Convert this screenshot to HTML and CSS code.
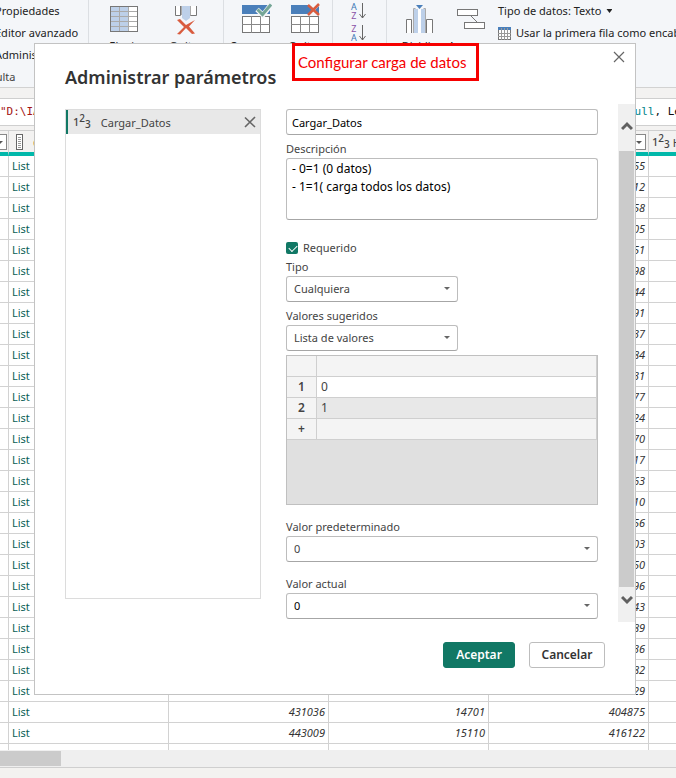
FILE: index.html
```html
<!DOCTYPE html>
<html lang="es">
<head>
<meta charset="utf-8">
<title>Administrar parámetros</title>
<link rel="stylesheet" href="styles.css">
</head>
<body>
<div class="app">
  <header class="ribbon">
    <div class="group group-query">
      <a href="#">Propiedades</a>
      <a href="#">Editor avanzado</a>
      <a href="#">Administrar</a>
      <span>Consulta</span>
    </div>
    <div class="group group-columns">
      <button class="tool" type="button">
        <svg width="30" height="36" viewBox="0 0 30 36"><rect x="1.500" y="3.500" width="27" height="25" fill="#fff"/><path d="M2 4h18v24H2z" fill="#bdd0e9"/><path d="M1 8.500h28M1 13.500h28M1 18.500h28M1 23.500h28M10.500 3v26M19.500 3v26" stroke="#aaa" fill="none"/><rect x="1.500" y="3.500" width="27" height="25" fill="none" stroke="#777"/></svg>
        <span>Elegir</span>
      </button>
      <button class="tool" type="button">
        <svg width="30" height="36" viewBox="0 0 30 36"><path d="M4.500 3v9.500h5V3M19.500 3v9.500h6V3" fill="#fff" stroke="#777"/><path d="M11 3h8v12l-4 3-4-3z" fill="#bdd0e9"/><path d="M10.500 3v9M19.500 3v9" stroke="#aaa"/><path d="M6 17l3-1 6 6 9-5-6 6.500 6 7-3 .5-6-6-6 6.500-3-.5 7-7z" fill="#d95c3f"/></svg>
        <span>Quitar</span>
      </button>
    </div>
    <div class="group group-rows">
      <button class="tool" type="button">
        <svg width="32" height="36" viewBox="0 0 32 36"><path d="M2 2h28v9H2z" fill="#4a7fba"/><rect x="2.500" y="13.500" width="27" height="16" fill="#fff" stroke="#777"/><path d="M2 21.500h28M11.500 13v17M20.500 13v17" stroke="#888"/><path d="M17 6.500l6 5.500L31.500 1" stroke="#f4f6f9" stroke-width="5" fill="none"/><path d="M17.500 6.500l5 5L31 1.500" stroke="#75a696" stroke-width="3" fill="none"/></svg>
        <span>Conservar</span>
      </button>
      <button class="tool" type="button">
        <svg width="32" height="36" viewBox="0 0 32 36"><path d="M2 2h18l3 4-3 5H2z" fill="#4a7fba"/><path d="M30 3v8h-1l-3-4z" fill="#4a7fba"/><rect x="2.500" y="13.500" width="27" height="16" fill="#fff" stroke="#777"/><path d="M2 21.500h28M11.500 13v17M20.500 13v17" stroke="#888"/><path d="M19 2l11 10M30 1L19 12" stroke="#d95c3f" stroke-width="2.500" fill="none"/></svg>
        <span>Quitar</span>
      </button>
    </div>
    <div class="group group-sort">
      <button class="sort" type="button" aria-label="Orden ascendente">
        <span class="az"><b class="blue">A</b><b class="violet">Z</b></span>
        <svg width="7" height="16" viewBox="0 0 7 16"><path d="M3.500 0v15M.5 11l3 4 3-4" stroke="#666" fill="none"/></svg>
      </button>
      <button class="sort" type="button" aria-label="Orden descendente">
        <span class="az"><b class="violet">Z</b><b class="blue">A</b></span>
        <svg width="7" height="16" viewBox="0 0 7 16"><path d="M3.500 0v15M.5 11l3 4 3-4" stroke="#666" fill="none"/></svg>
      </button>
    </div>
    <div class="group group-transform">
      <button class="tool" type="button">
        <svg width="30" height="36" viewBox="0 0 30 36"><path d="M2.500 30V16.500h5V30M22.500 30V16.500h6V30" fill="#fff" stroke="#777"/><path d="M10 6h4v24h-4zM17 6h4v24h-4z" fill="#bdd0e9"/><path d="M14 6h3v24h-3z" fill="#fff"/><path d="M9.500 30V5.500h2M21.500 30V5.500h-2" stroke="#aaa" fill="none"/><path d="M12 2h7l-3.500 4z" fill="#4a7fba"/></svg>
        <span>Dividir</span>
      </button>
      <button class="tool" type="button">
        <svg width="32" height="36" viewBox="0 0 32 36"><rect x="3.500" y="6.500" width="20" height="6" fill="#fff" stroke="#777"/><rect x="10.500" y="19.500" width="20" height="6" fill="#fff" stroke="#777"/><path d="M17 13l6 6" stroke="#777"/></svg>
        <span>Agrupar</span>
      </button>
      <div class="links">
        <a href="#">Tipo de datos: Texto <i class="caret dark"></i></a>
        <a href="#"><svg width="13" height="13" viewBox="0 0 13 13"><rect x=".5" y=".5" width="12" height="12" fill="#fff" stroke="#777"/><path d="M0 0h13v3H0z" fill="#4a7fba"/><path d="M3.500 1v12M6.500 1v12M9.500 1v12M0 6.500h13M0 9.500h13" stroke="#999"/></svg>Usar la primera fila como encabezado</a>
      </div>
    </div>
  </header>

  <div class="formula">
    <span class="string">"D:\IA</span>
    <span class="tail"><span class="keyword">null</span>, Length</span>
  </div>

  <main class="grid-wrap">
    <table class="grid">
      <colgroup><col class="c-edge"><col><col><col><col><col class="c-last"></colgroup>
      <thead>
        <tr>
          <th><i class="filter"></i></th>
          <th class="list-head"><svg width="7" height="16" viewBox="0 0 7 16"><rect x=".5" y=".5" width="6" height="15" fill="#fff" stroke="#666"/><path d="M2 3.500h3M2 5.500h3M2 7.500h3M2 9.500h3M2 11.500h3M2 13.500h3" stroke="#999"/></svg><span>Col</span></th>
          <th></th><th></th>
          <th class="num"><i class="filter"></i></th>
          <th class="typed"><span class="n123">1<sup>2</sup><sub>3</sub></span><span class="col-name">H</span></th>
        </tr>
      </thead>
      <tbody>
        <tr><td></td><td>List</td><td></td><td></td><td>55</td><td></td></tr>
        <tr><td></td><td>List</td><td></td><td></td><td>12</td><td></td></tr>
        <tr><td></td><td>List</td><td></td><td></td><td>58</td><td></td></tr>
        <tr><td></td><td>List</td><td></td><td></td><td>05</td><td></td></tr>
        <tr><td></td><td>List</td><td></td><td></td><td>51</td><td></td></tr>
        <tr><td></td><td>List</td><td></td><td></td><td>98</td><td></td></tr>
        <tr><td></td><td>List</td><td></td><td></td><td>44</td><td></td></tr>
        <tr><td></td><td>List</td><td></td><td></td><td>91</td><td></td></tr>
        <tr><td></td><td>List</td><td></td><td></td><td>37</td><td></td></tr>
        <tr><td></td><td>List</td><td></td><td></td><td>84</td><td></td></tr>
        <tr><td></td><td>List</td><td></td><td></td><td>31</td><td></td></tr>
        <tr><td></td><td>List</td><td></td><td></td><td>77</td><td></td></tr>
        <tr><td></td><td>List</td><td></td><td></td><td>24</td><td></td></tr>
        <tr><td></td><td>List</td><td></td><td></td><td>70</td><td></td></tr>
        <tr><td></td><td>List</td><td></td><td></td><td>17</td><td></td></tr>
        <tr><td></td><td>List</td><td></td><td></td><td>63</td><td></td></tr>
        <tr><td></td><td>List</td><td></td><td></td><td>10</td><td></td></tr>
        <tr><td></td><td>List</td><td></td><td></td><td>56</td><td></td></tr>
        <tr><td></td><td>List</td><td></td><td></td><td>03</td><td></td></tr>
        <tr><td></td><td>List</td><td></td><td></td><td>50</td><td></td></tr>
        <tr><td></td><td>List</td><td></td><td></td><td>96</td><td></td></tr>
        <tr><td></td><td>List</td><td></td><td></td><td>43</td><td></td></tr>
        <tr><td></td><td>List</td><td></td><td></td><td>89</td><td></td></tr>
        <tr><td></td><td>List</td><td></td><td></td><td>36</td><td></td></tr>
        <tr><td></td><td>List</td><td></td><td></td><td>82</td><td></td></tr>
        <tr><td></td><td>List</td><td></td><td></td><td>29</td><td></td></tr>
        <tr><td></td><td>List</td><td>431036</td><td>14701</td><td>404875</td><td></td></tr>
        <tr><td></td><td>List</td><td>443009</td><td>15110</td><td>416122</td><td></td></tr>
        <tr><td></td><td></td><td></td><td></td><td></td><td></td></tr>
      </tbody>
    </table>
  </main>
  <div class="hscroll"><div class="hthumb"></div></div>
  <footer class="status"></footer>
</div>

<section class="dialog" role="dialog" aria-labelledby="dlg-title">
  <button class="close" type="button" aria-label="Cerrar"><svg width="12" height="12" viewBox="0 0 12 12"><path d="M1 1l10 10M11 1L1 11" stroke="#666" stroke-width="1.200"/></svg></button>
  <h1 id="dlg-title">Administrar parámetros</h1>
  <div class="dialog-body">
    <div class="params">
      <div class="param">
        <span class="n123">1<sup>2</sup><sub>3</sub></span>
        <span class="param-name">Cargar_Datos</span>
        <button type="button" class="remove" aria-label="Eliminar"><svg width="12" height="12" viewBox="0 0 12 12"><path d="M1 1.500l10 9.500M11 1L1 11" stroke="#666" stroke-width="1.600"/></svg></button>
      </div>
    </div>
    <form class="form">
      <input class="box" type="text" value="Cargar_Datos" aria-label="Nombre">
      <label class="desc-label" for="desc">Descripción</label>
      <textarea class="box" id="desc">- 0=1 (0 datos)
- 1=1( carga todos los datos)</textarea>
      <div class="check"><input type="checkbox" id="req" checked><label for="req">Requerido</label></div>
      <label for="tipo">Tipo</label>
      <div class="select short"><select class="box" id="tipo"><option>Cualquiera</option></select></div>
      <label class="gap-s" for="sug">Valores sugeridos</label>
      <div class="select short"><select class="box" id="sug"><option>Lista de valores</option></select></div>
      <div class="values">
        <table>
          <tbody>
            <tr><th></th><td></td></tr>
            <tr class="white"><th>1</th><td>0</td></tr>
            <tr class="alt"><th>2</th><td>1</td></tr>
            <tr><th class="plus">+</th><td></td></tr>
          </tbody>
        </table>
      </div>
      <label class="gap-l" for="def">Valor predeterminado</label>
      <div class="select"><select class="box" id="def"><option>0</option></select></div>
      <label class="gap-l" for="act">Valor actual</label>
      <div class="select"><select class="box black" id="act"><option>0</option></select></div>
    </form>
    <div class="vscroll">
      <svg width="12" height="10" viewBox="0 0 12 10"><path d="M1 8l5-5 5 5" stroke="#606060" stroke-width="3" fill="none"/></svg>
      <div class="vthumb"></div>
      <svg width="12" height="10" viewBox="0 0 12 10"><path d="M1 2l5 5 5-5" stroke="#606060" stroke-width="3" fill="none"/></svg>
    </div>
  </div>
  <div class="actions">
    <button class="btn primary" type="button">Aceptar</button>
    <button class="btn" type="button">Cancelar</button>
  </div>
</section>
<div class="note">Configurar carga de datos</div>
</body>
</html>
```
FILE: styles.css
```css
* { box-sizing: border-box; }
body {
  margin: 0;
  font-family: "Noto Sans", "Open Sans", sans-serif;
  font-size: 11px;
  color: #333;
  overflow: hidden;
}
button, input, select, textarea { font: inherit; color: inherit; }
button { background: none; border: 0; padding: 0; }
a { color: inherit; text-decoration: none; }
.app { display: flex; flex-direction: column; height: 100vh; background: #f3f2f1; }

/* Ribbon */
.ribbon { display: flex; flex: none; height: 88px; background: #f4f6f9; border-bottom: 1px solid #d2d2d2; overflow: hidden; color: #222; }
.group { display: flex; flex: none; border-right: 1px solid #dcdfe3; }
.group-query { flex-direction: column; width: 89px; overflow: hidden; line-height: 22px; white-space: nowrap; }
.group-query a { margin-left: -5px; }
.group-query span { margin-left: -30px; color: #444; }
.group-columns { width: 135px; padding-left: 4px; }
.group-rows { width: 109px; padding-left: 8px; gap: 1px; }
.group-sort { width: 54px; flex-direction: column; padding: 2px 0 0 18px; gap: 4px; }
.group-transform { flex: 1; border: 0; padding-left: 6px; }
.tool { display: flex; flex-direction: column; align-items: center; width: 60px; padding-top: 3px; line-height: 14px; height: 60px; }
.group-rows .tool { width: 48px; }
.group-transform .tool { width: 51px; }
.group-columns .tool { width: 62px; }
.sort { display: flex; align-items: center; gap: 2px; height: 18px; }
.az { display: flex; flex-direction: column; font-size: 9px; line-height: 9px; }
.az b { font-weight: 400; }
.blue { color: #3a76b5; }
.violet { color: #8a52a8; }
.links { display: flex; flex-direction: column; margin-left: 3px; line-height: 22px; white-space: nowrap; }
.links a { display: flex; align-items: center; gap: 5px; }
.caret { width: 6px; height: 4px; background: #555; clip-path: polygon(0 0, 100% 0, 50% 100%); }
.dark { background: #222; }

/* Formula bar */
.formula { display: flex; justify-content: space-between; flex: none; height: 28px; margin-top: 10px; background: #fff; border: 1px solid #cfcfcf; border-width: 1px 0; font: 11px/26px "DejaVu Sans Mono", monospace; white-space: nowrap; overflow: hidden; color: #111; }
.string { color: #a31515; }
.tail { width: 48px; }
.keyword { color: #008489; }

/* Data grid */
.grid-wrap { flex: 1; min-height: 0; overflow: hidden; margin-top: 4px; background: #fff; }
.grid { width: 100%; table-layout: fixed; border-collapse: separate; border-spacing: 0; }
.c-edge { width: 9px; }
.c-last { width: 27px; }
.grid th, .grid td { padding: 0; border-right: 1px solid #d2d2d2; overflow: hidden; white-space: nowrap; }
.grid tr > :last-child { border-right: 0; }
.grid th { height: 26px; background: #f3f2f1; border-top: 1px solid #cfcfcf; border-bottom: 4px solid #01b8aa; font-weight: 400; text-align: left; }
.grid td { height: 21px; line-height: 20px; border-bottom: 1px solid #d2d2d2; padding-right: 3px; text-align: right; font-style: italic; }
.grid td:nth-child(2) { padding-left: 3px; text-align: left; font-style: normal; color: #0b5f57; }
.grid td:first-child { padding: 0; }
.grid th.list-head { padding-left: 7px; }
.list-head svg, .list-head span, .typed span { vertical-align: middle; }
.list-head span { margin-left: 10px; color: #a56a35; }
.grid th.typed { padding-left: 3px; color: #444; }
.col-name { margin-left: 3px; }
.grid th.num { text-align: right; padding-right: 2px; }
.filter { display: inline-block; position: relative; width: 15px; height: 16px; border: 1px solid #888; background: #fff; vertical-align: middle; }
.grid th:first-child { direction: rtl; padding-right: 2px; }
.filter::after { content: ""; position: absolute; left: 4px; top: 6px; width: 6px; height: 3px; background: #555; clip-path: polygon(0 0, 100% 0, 50% 100%); }
.hscroll { flex: none; height: 17px; background: #efefef; padding: 1px 0; }
.hthumb { width: 9%; height: 15px; background: #cbcbcb; }
.status { flex: none; height: 11px; background: #f3f2f0; border-top: 1px solid #cfcfcf; }

/* Numeric type mark */
.n123 { font-size: 11px; font-weight: 500; line-height: 16px; white-space: nowrap; color: #444; }
.n123 sup, .n123 sub { font-size: 10px; line-height: 0; }
.n123 sup { vertical-align: 4px; }
.n123 sub { vertical-align: -2px; }

/* Dialog */
.dialog { position: absolute; left: 34px; right: 40px; top: 43px; background: #fff; border: 1px solid #c3c3c3; padding-bottom: 26px; }
.close { position: absolute; right: 10px; top: 7px; line-height: 0; }
.dialog h1 { margin: 0; padding: 19px 30px 13px; font-size: 18px; line-height: 28px; font-weight: 600; color: #333; }
.dialog-body { display: flex; padding-left: 30px; }
.params { flex: none; width: 196px; margin: 5px 25px 23px 0; border: 1px solid #dcdcdc; }
.param { display: flex; align-items: center; height: 24px; padding-left: 5px; padding-right: 4px; background: #e8e8e8; border-left: 2px solid #117865; }
.param-name { flex: 1; margin-left: 10px; color: #444; }
.remove { line-height: 0; }
.form { flex: 1; min-width: 0; display: flex; flex-direction: column; padding-top: 5px; line-height: 18px; color: #444; }
.box { width: 100%; height: 26px; margin: 0; border: 1px solid #bdbdbd; border-bottom-color: #a6a6a6; border-radius: 3px; background: #fff; padding: 0 5px; outline: 0; }
.form label { display: block; height: 18px; }
input.box, textarea.box, .box.black { color: #000; }
.desc-label { margin-top: 5px; }
textarea.box { height: 62px; padding: 1px 5px; font-size: 12px; line-height: 18px; resize: none; overflow: hidden; }
.check { display: flex; align-items: center; gap: 5px; margin-top: 18px; height: 20px; }
.check input { appearance: none; width: 12px; height: 12px; margin: 0; border-radius: 2px; background: #117865; position: relative; }
.check input::after { content: ""; position: absolute; left: 3px; top: 3px; width: 7px; height: 4px; border: solid #fff; border-width: 0 0 1px 1px; transform: rotate(-45deg); }
.select { position: relative; }
.select.short { width: 172px; }
.select::after { content: ""; position: absolute; right: 8px; top: 11px; width: 6px; height: 3px; background: #666; clip-path: polygon(0 0, 100% 0, 50% 100%); pointer-events: none; }
.select select { appearance: none; display: block; padding: 0 7px; }
.form .gap-s { margin-top: 5px; }
.form .gap-l { margin-top: 13px; }
.values { height: 150px; margin-top: 4px; border: 1px solid #c0c0c0; background: #e0e0e0; font-size: 12px; }
.values table { width: 100%; border-collapse: separate; border-spacing: 0; }
.values th, .values td { height: 21px; padding: 0 4px; line-height: 18px; background: #f4f4f4; border-right: 1px solid #cfcfcf; border-bottom: 1px solid #cfcfcf; text-align: left; }
.values th { width: 30px; text-align: center; font-weight: 600; }
.values .white td { background: #fff; }
.values .alt td { background: #e8e8e8; }
.vscroll { flex: none; width: 17px; margin-left: 20px; height: 518px; display: flex; flex-direction: column; align-items: center; background: #f0f0f0; padding: 17px 0; }
.vthumb { flex: 1; width: 15px; margin: 20px 0 8px; background: #cbcbcb; }
.actions { display: flex; justify-content: flex-end; gap: 14px; margin-top: 20px; padding-right: 30px; }
.btn { width: 76px; height: 26px; border: 1px solid #bdbdbd; border-radius: 3px; font-size: 12px; font-weight: 600; line-height: 22px; background: #fff; color: #333; }
.primary { width: 72px; background: #117865; border-color: #117865; color: #fff; }

/* Red callout */
.note { position: absolute; left: 292px; top: 43px; width: 187px; height: 38px; border: 3px solid #f60000; background: #fff; padding-left: 3px; font: 15px/32px "Lato", "Noto Sans", sans-serif; color: #f60000; white-space: nowrap; }
```
